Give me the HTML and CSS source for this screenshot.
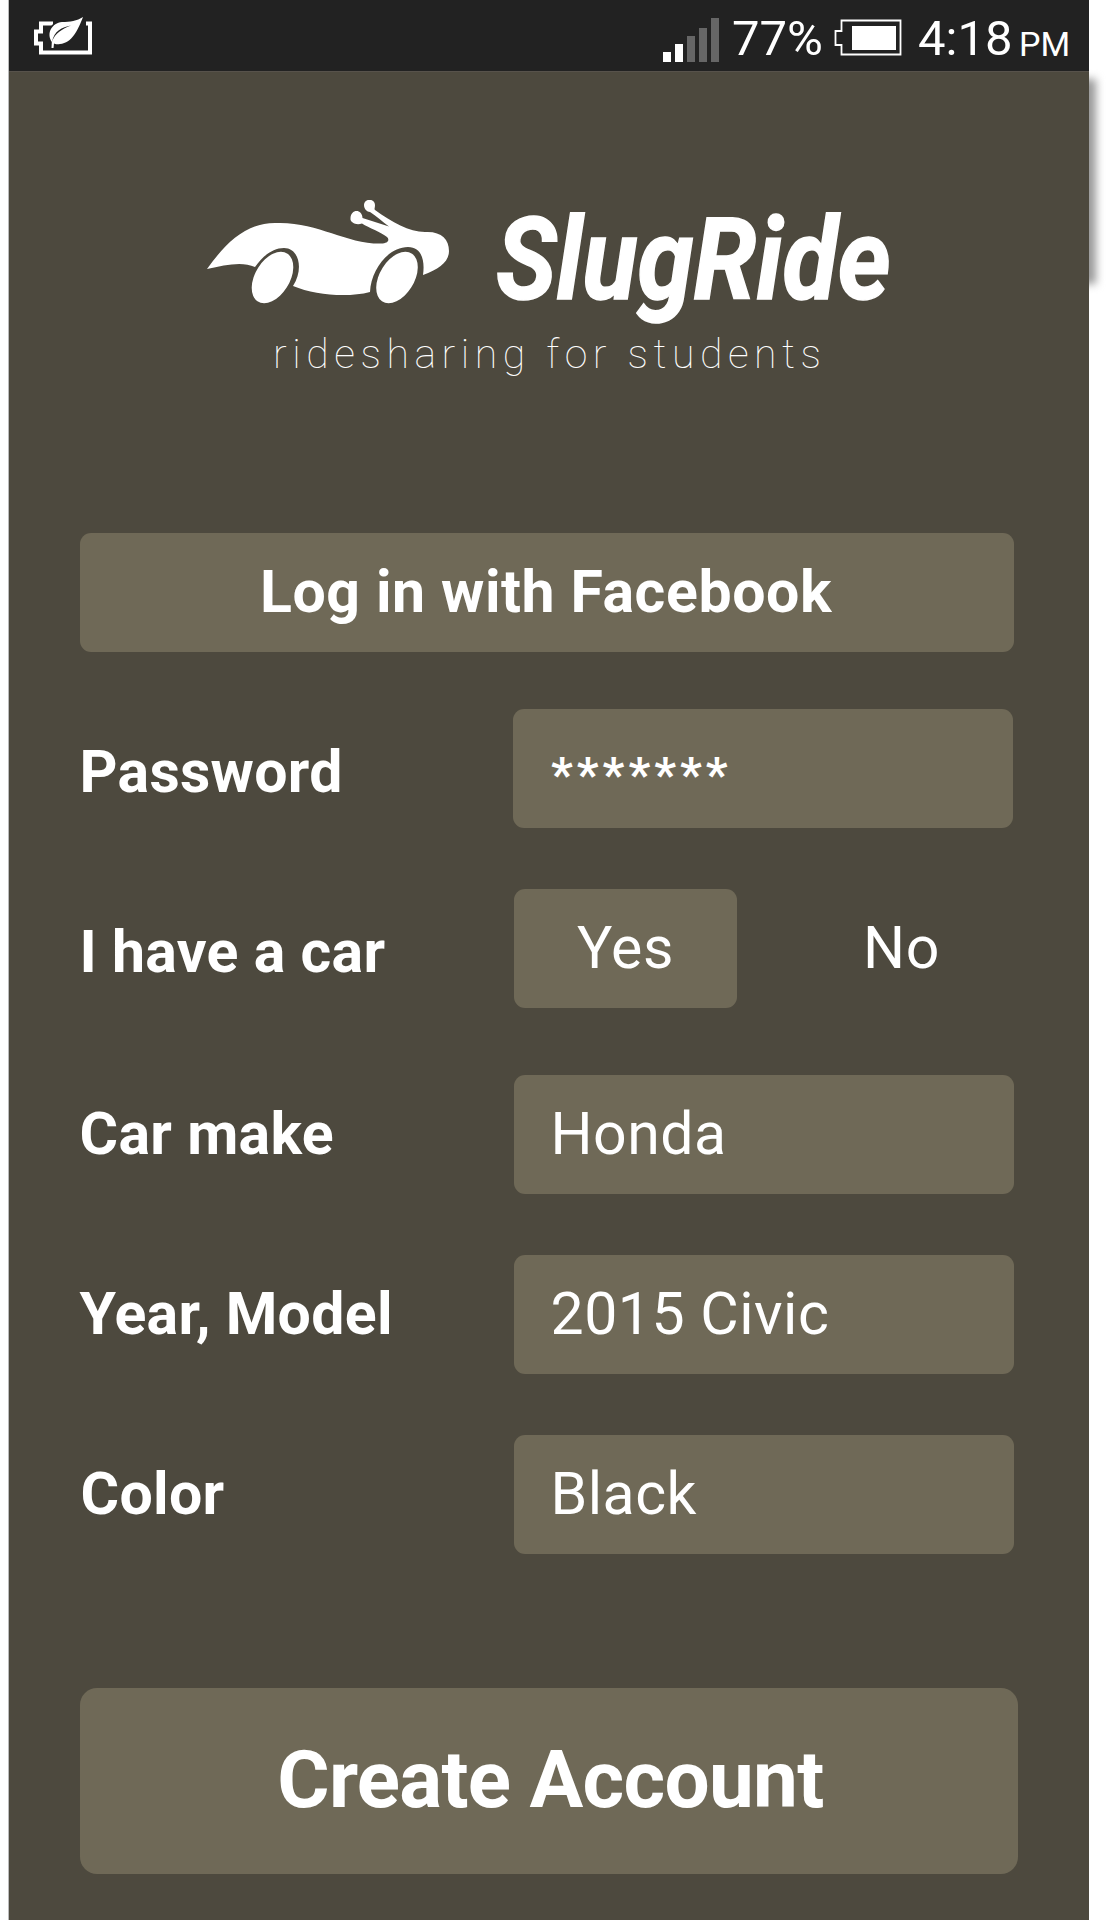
FILE: index.html
```html
<!DOCTYPE html>
<html lang="en">
<head>
<meta charset="utf-8">
<title>SlugRide</title>
<link rel="stylesheet" href="styles.css">
</head>
<body>
<div class="frame">
<main class="screen">
  <header class="status">
    <svg class="saver" width="60" height="40" viewBox="0 0 60 40">
      <path d="M19 7.500H7v8H2v12h5v9h49V7.500h-4" fill="none" stroke="#fff" stroke-width="4"/>
      <path d="M49 1C44 14 38 27 26 28C23 28.500 21 28 20 27.500L19.500 32H17.500L17.800 26C12 17 18 7 28 6C36 6 43 5 49 1Z" fill="#fff" stroke="#222" stroke-width="3" paint-order="stroke"/>
      <path d="M18 26C20 15 28 11 37 9.500C28 13 21 17 18 26Z" fill="#222"/>
    </svg>
    <div class="status-right">
      <svg class="signal" width="56" height="44" viewBox="0 0 56 44">
        <path d="M0 34h8v10H0zM12 26h8v18h-8z" fill="#fff"/>
        <path d="M24 18h8v26h-8zM36 10h8v34h-8zM48 0h8v44h-8z" fill="#666"/>
      </svg>
      <span class="percent">77%</span>
      <svg class="battery" width="68" height="38" viewBox="0 0 68 38">
        <path d="M7.500 1.500H66.500V35.500H7.500V26H1.500V12H7.500Z" fill="none" stroke="#fff" stroke-width="1.800"/>
        <path d="M18 7h44v24H18z" fill="#fff"/>
      </svg>
      <span class="time">4:18</span>
      <span class="meridiem">PM</span>
    </div>
  </header>
  <section class="brand">
    <div class="brand-row">
      <svg class="car" width="246" height="108" viewBox="0 0 246 108">
        <path fill="#fff" d="M0 69C18 44 38 23 68 23C110 21 138 44 174 43.500C181 43.500 183 40 180 37C174 32 162 28 155 23.500C149 26 143 22 143.500 19C143 9 155 8 155.500 18L182 26.500C176 22 169 16 163 12C160 12 157 9 157 5C157 -2 168 -2 168 5C168 8 167 9 168 10C185 22 202 32 218 32C234 31 242 39 242 51C242 62 232 69 216 75C218 61 215 47 201 47C181 47 164 70 163 92C140 98 108 95 86 86C97 69 92 48 77 48C65 48 55 57 48 67C35 61 18 65 0 69Z"/>
        <ellipse rx="19" ry="28" transform="matrix(1 0 -.3 .92 65.500 77.500)" fill="#fff"/>
        <ellipse rx="19" ry="28" transform="matrix(1 0 -.3 .92 190 77.500)" fill="#fff"/>
      </svg>
      <h1 class="name"><span class="fit">SlugRide</span></h1>
    </div>
    <p class="tagline">ridesharing for students</p>
  </section>
  <form class="form">
    <button class="box login" type="button">Log in with Facebook</button>
    <div class="row password"><span class="label low">Password</span><span class="box field stars">*******</span></div>
    <div class="row has-car"><span class="label low">I have a car</span><span class="choices"><span class="box choice">Yes</span><span class="choice off">No</span></span></div>
    <div class="row make"><span class="label">Car make</span><span class="box field">Honda</span></div>
    <div class="row model"><span class="label">Year, Model</span><span class="box field">2015 Civic</span></div>
    <div class="row color"><span class="label">Color</span><span class="box field">Black</span></div>
    <button class="box create" type="button">Create Account</button>
  </form>
</main>
<div class="edge"></div>
</div>
</body>
</html>
```
FILE: styles.css
```css
* { box-sizing: border-box; }
body { margin: 0; background: #fff; color: #fff; font-family: Roboto, sans-serif; overflow: hidden; }
.frame { display: flex; align-items: flex-start; width: 1111px; height: 1920px; padding-left: 9px; overflow: hidden; }
.screen { width: 1080px; height: 1920px; flex: none; background: #4d493e; position: relative; z-index: 1; box-shadow: -1px 0 #bbb; }
.edge { width: 27px; height: 205px; flex: none; margin: 79px 0 0 -20px; background: #999; filter: blur(4px); }
.status { display: flex; justify-content: space-between; height: 72px; background: #222; border-bottom: 1px solid #57524b; }
.saver { margin: 16px 0 0 25px; }
.status-right { display: flex; white-space: nowrap; line-height: 56px; height: 71px; }
.signal { margin-top: 18px; }
.percent, .time { font-size: 49px; margin-top: 11px; }
.percent { width: 90px; margin-left: 13px; }
.battery { margin: 19px 0 0 12px; }
.time { width: 92px; margin-left: 16px; }
.meridiem { font-size: 34px; margin: 16px 18px 0 9px; width: 52px; }
.brand { height: 461px; padding-top: 128px; }
.brand-row { display: flex; height: 132px; padding-left: 198px; }
.name { margin: -7px 0 0 43px; font-size: 114px; line-height: 134px; font-style: italic; font-weight: 700; -webkit-text-stroke: 1.500px #fff; }
.fit { display: block; transform: scaleX(.888); transform-origin: 0 0; }
.tagline { margin: -2px 0 0 264px; font-size: 41px; line-height: 48px; font-weight: 100; letter-spacing: 5.550px; white-space: nowrap; }
.form { padding-left: 70.5px; width: 1010px; }
.box { background: #6f6957; border-radius: 11px; }
button { display: block; border: 0; padding: 0; color: inherit; font: inherit; font-weight: 700; white-space: nowrap; }
.login { width: 934px; height: 119px; padding: 0 1px 2px 0; font-size: 59px; letter-spacing: .58px; margin-bottom: 57px; }
.row { display: flex; justify-content: space-between; height: 119px; width: 934.500px; font-size: 59px; line-height: 117px; letter-spacing: .3px; margin-bottom: 61px; white-space: nowrap; }
.label { font-weight: 700; }
.low { padding-top: 4px; }
.field { width: 500px; padding-left: 36.5px; letter-spacing: .5px; }
.stars { margin-right: 1px; padding-left: 38px; font-size: 48px; font-weight: 700; line-height: 131px; letter-spacing: 4px; }
.choices { display: flex; width: 500px; justify-content: space-between; }
.choice { width: 223px; text-align: center; letter-spacing: .6px; }
.off { padding-right: 2px; }
.has-car { margin-bottom: 67px; }
.color { margin-bottom: 134px; }
.color .label { padding-left: 1px; }
.create { width: 938px; height: 186px; padding: 0 0 2px 4px; border-radius: 17px; font-size: 80px; letter-spacing: -.7px; }
```
